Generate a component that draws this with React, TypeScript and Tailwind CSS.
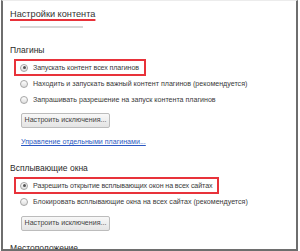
const Radio = ({ checked }: { checked?: boolean }) => (
  <span className="flex items-center justify-center w-[8px] h-[8px] rounded-full border border-[#a6a6a6] bg-gradient-to-b from-[#ffffff] to-[#dedede] shrink-0">
    {checked && <span className="block w-[3px] h-[3px] rounded-full bg-[#555]" />}
  </span>
);

const Option = ({ label, checked }: { label: string; checked?: boolean }) => (
  <div className="flex items-center gap-[5px] h-[16px] ml-[10px]">
    <Radio checked={checked} />
    <span className="text-[7.1px] leading-[10px] text-[#3a3a3a] whitespace-nowrap">{label}</span>
  </div>
);

// option wrapped in the red annotation frame
const Highlighted = ({ label }: { label: string }) => (
  <div className="flex items-center gap-[5px] w-fit h-[17px] ml-[4px] pl-[4px] pr-[5px] border-2 border-[#e8323a]">
    <Radio checked />
    <span className="text-[7.1px] leading-[10px] text-[#3a3a3a] whitespace-nowrap tracking-[-0.1px]">{label}</span>
  </div>
);

const ExceptionsButton = ({ top }: { top: string }) => (
  <button
    type="button"
    className={`${top} ml-[11px] flex items-center justify-center w-[89px] h-[15px] rounded-[2px] border border-[#bcbcbc] bg-gradient-to-b from-[#f8f8f8] to-[#e4e4e4] text-[7.1px] text-[#444]`}
  >
    Настроить исключения...
  </button>
);

export default function App() {
  return (
    <div className="w-[300px] h-[251px] bg-white overflow-hidden font-['Liberation_Sans',Arial,sans-serif]">
      <div className="ml-px w-[297px] h-[251px] border-x-2 border-b-2 border-t border-t-[#ececec] border-x-[#6e6e6e] border-b-[#6e6e6e] pl-[7px] overflow-hidden">
        <div className="mt-[7px] text-[9.2px] leading-[12px] text-[#333]">
          <span className="underline decoration-2 decoration-[#e8323a] underline-offset-[2px]">
            Настройки контента
          </span>
        </div>
        <div className="mt-[6px] ml-[10px] w-[63px] h-[2px] bg-[#d8d8d8]" />

        <div className="mt-[16px] text-[8.5px] leading-[12px] text-[#2a2a2a]">Плагины</div>
        <div className="mt-[3px]">
          <Highlighted label="Запускать контент всех плагинов" />
          <Option label="Находить и запускать важный контент плагинов (рекомендуется)" />
          <Option label="Запрашивать разрешение на запуск контента плагинов" />
        </div>
        <ExceptionsButton top="mt-[5px]" />
        <div className="mt-[9px] ml-[11px] text-[7.1px] leading-[10px] text-[#2b58c2] underline">
          Управление отдельными плагинами...
        </div>

        <div className="mt-[15px] text-[8.5px] leading-[12px] text-[#2a2a2a]">Всплывающие окна</div>
        <div className="mt-[3px]">
          <Highlighted label="Разрешить открытие всплывающих окон на всех сайтах" />
          <Option label="Блокировать всплывающие окна на всех сайтах (рекомендуется)" />
        </div>
        <ExceptionsButton top="mt-[6px]" />

        <div className="mt-[11px] text-[8.5px] leading-[12px] text-[#2a2a2a]">Местоположение</div>
      </div>
    </div>
  );
}
